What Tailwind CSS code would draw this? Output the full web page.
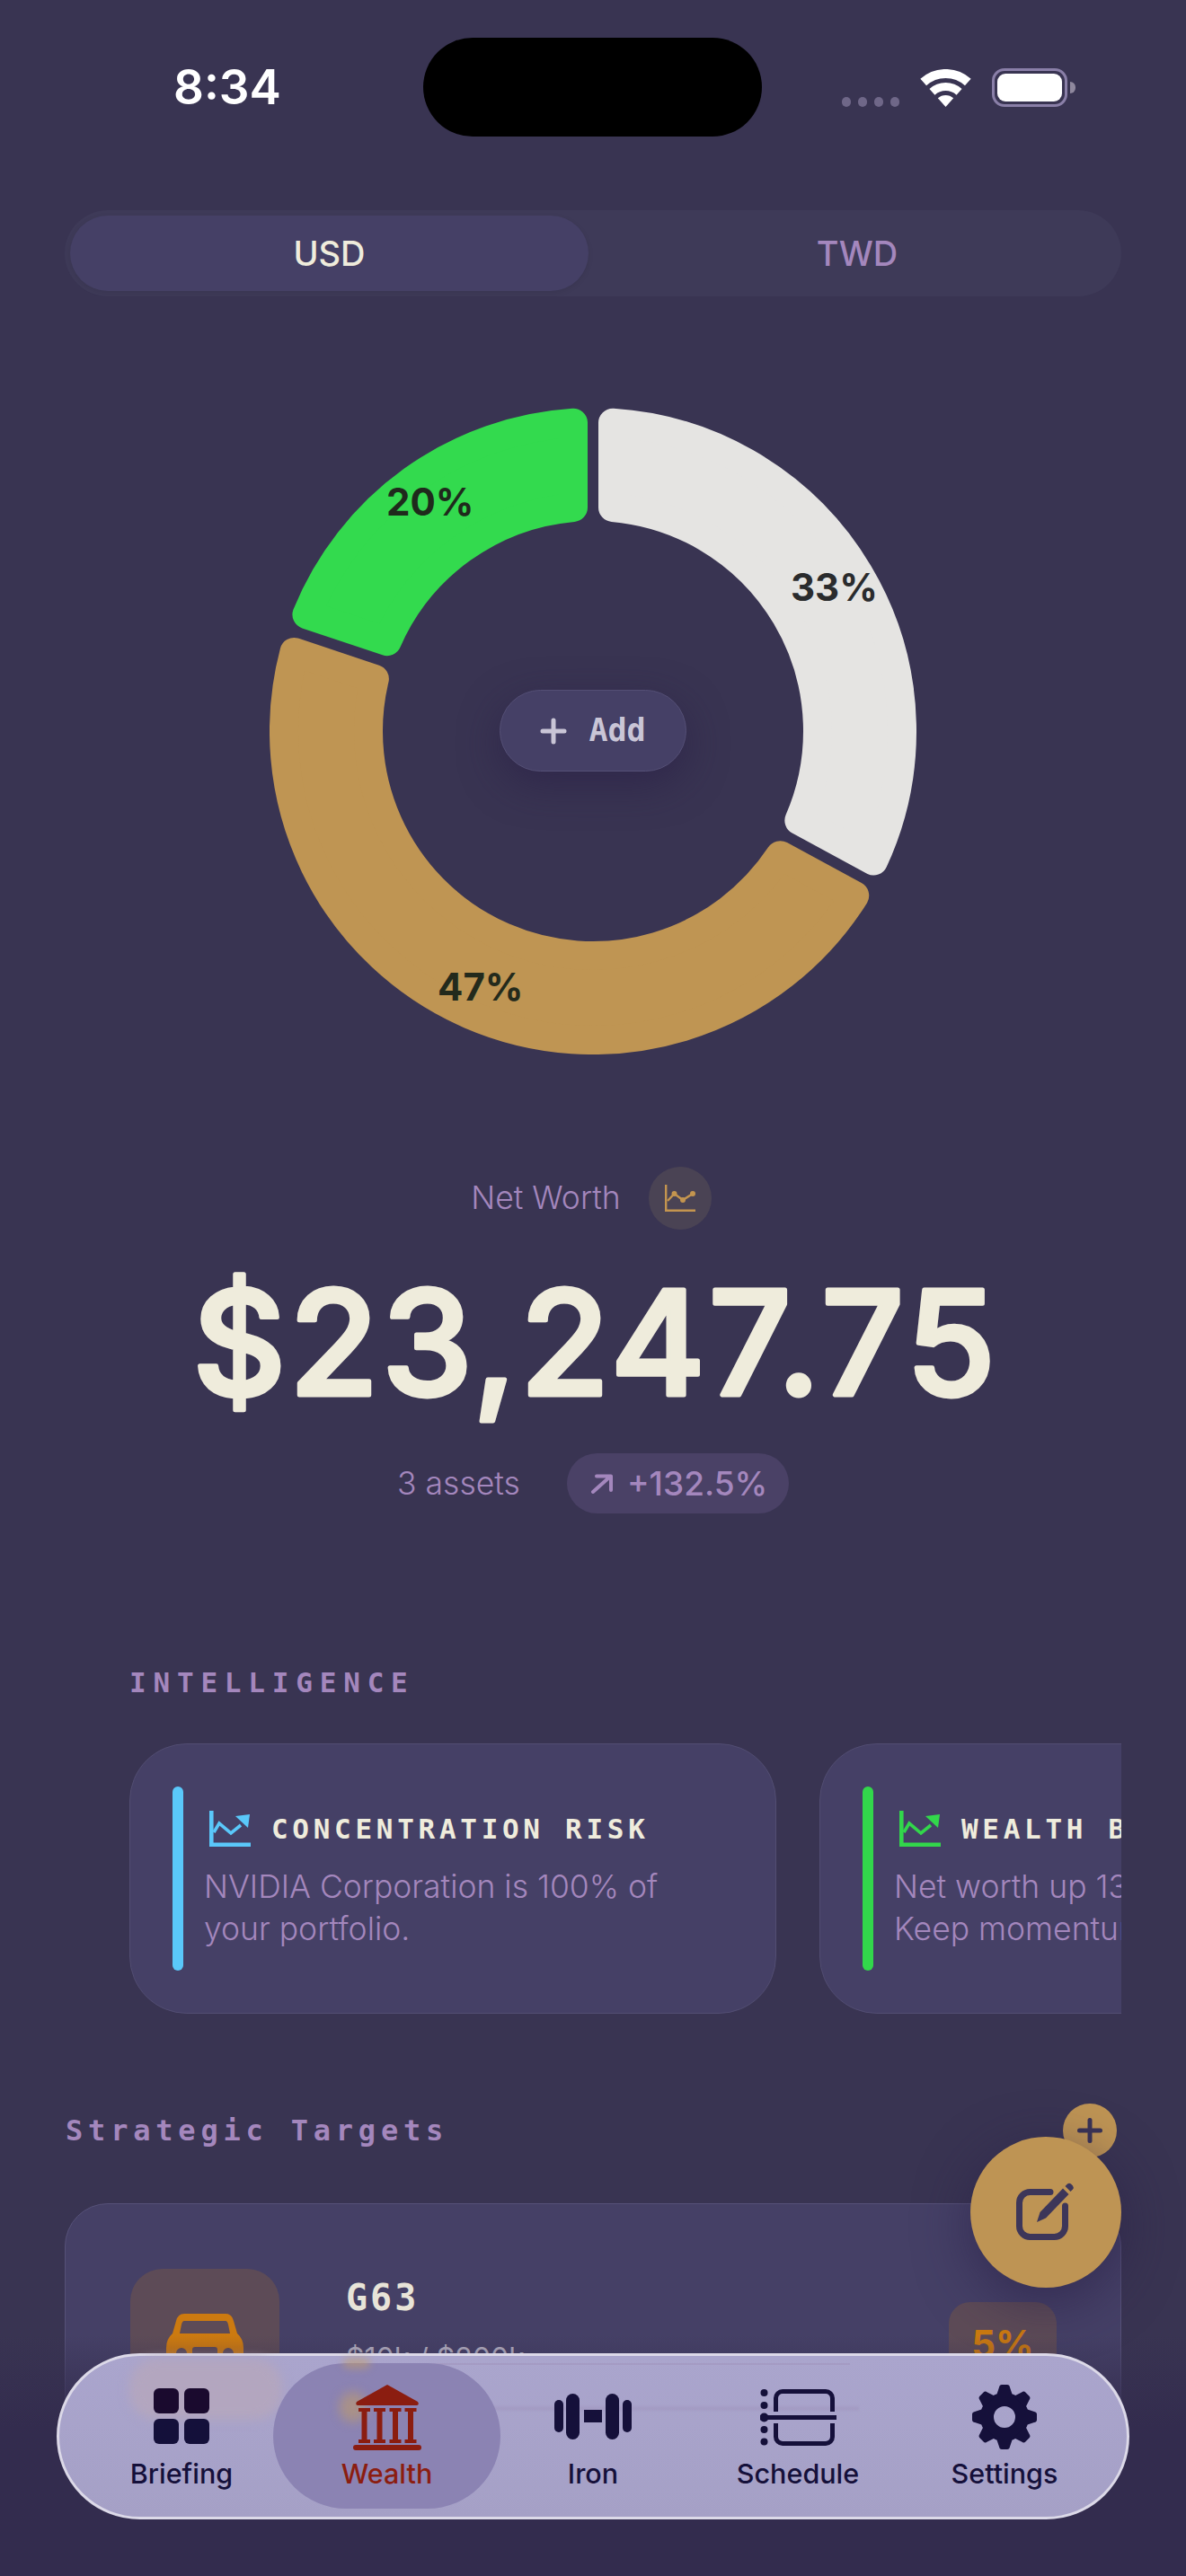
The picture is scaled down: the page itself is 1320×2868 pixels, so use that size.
<!DOCTYPE html>
<html lang="en">
<head>
    <meta charset="UTF-8">
    <title>Wealth</title>
    <script src="https://cdn.jsdelivr.net/npm/@tailwindcss/browser@4"></script>
</head>
<body>
    <div class="relative w-[1320px] h-[2868px] overflow-hidden bg-[#393452] font-['Inter',sans-serif] text-[#a487bd]">

        <!-- Status bar -->
        <div class="flex items-center h-[110px] mt-[42px]">
            <div class="w-[471px] pl-[193px] text-[53px] leading-none font-semibold text-white">8:34</div>
            <div class="w-[377px] h-[110px] rounded-full bg-black"></div>
            <div class="flex-1 flex items-end h-[43px] pl-[89px]">
                <div class="flex gap-[8px] mr-[23px]">
                    <span class="w-[10px] h-[11px] rounded-full bg-[#6f6788]"></span>
                    <span class="w-[10px] h-[11px] rounded-full bg-[#6f6788]"></span>
                    <span class="w-[10px] h-[11px] rounded-full bg-[#6f6788]"></span>
                    <span class="w-[10px] h-[11px] rounded-full bg-[#6f6788]"></span>
                </div>
                <svg class="w-[57px] h-[42px] mr-[23px]" viewBox="0 0 57 42" fill="none" stroke="#fff">
                    <path d="M3.7 14.5A37 37 0 0 1 53.3 14.5" stroke-width="10"/>
                    <path d="M13.45 25.3A22.5 22.5 0 0 1 43.55 25.3" stroke-width="9"/>
                    <path d="M19.8 32.3A13 13 0 0 1 37.2 32.3L28.5 42Z" fill="#fff" stroke="none"/>
                </svg>
                <div class="flex items-center">
                    <div class="w-[84px] h-[43px] rounded-[14px] border-[3px] border-[#8a7fa8] p-[3px]">
                        <div class="w-full h-full rounded-[9px] bg-white"></div>
                    </div>
                    <div class="w-[6px] h-[13px] ml-[3px] rounded-r-full bg-[#8f889e]"></div>
                </div>
            </div>
        </div>

        <!-- Currency switch -->
        <div class="flex mx-[72px] mt-[82px] h-[96px] p-[6px] rounded-[48px] bg-[#3e3a58]">
            <div class="w-[577px] h-[84px] rounded-[42px] bg-[#454066] flex items-center justify-center text-[38px] font-medium text-[#efecdc] shadow-[0_2px_6px_rgba(0,0,0,0.08)]">USD</div>
            <div class="flex-1 flex items-center justify-center pl-[11px] text-[38px] font-medium text-[#a487bd]">TWD</div>
        </div>

        <!-- Donut -->
        <div class="relative w-[720px] h-[720px] mt-[124px] mx-auto">
            <svg class="block w-[720px] h-[720px]" viewBox="-360 -360 720 720">
                <path class="donut fill-[#e5e4e2] stroke-[#e5e4e2]" data-from="0" data-to="118.5" stroke-width="32" stroke-linejoin="round"/>
                <path class="donut fill-[#bf9553] stroke-[#bf9553]" data-from="118.5" data-to="288.5" stroke-width="32" stroke-linejoin="round"/>
                <path class="donut fill-[#33da4e] stroke-[#33da4e]" data-from="288.5" data-to="360" stroke-width="32" stroke-linejoin="round"/>
            </svg>
            <span class="absolute left-[130px] top-[81px] text-[42px] leading-[48px] font-bold text-[#1f2a1c]">20%</span>
            <span class="absolute left-[580px] top-[176px] text-[42px] leading-[48px] font-bold text-[#2a2b2d]">33%</span>
            <span class="absolute left-[187px] top-[621px] text-[42px] leading-[48px] font-bold text-[#232a1c]">47%</span>
            <div class="absolute left-[256px] top-[314px] w-[208px] h-[91px] rounded-full bg-[#454066] border border-[#544f75] flex items-center justify-center gap-[24px] shadow-[0_14px_44px_rgba(40,30,70,0.55)]">
                <svg class="w-[30px] h-[30px]" viewBox="0 0 30 30" stroke="#c9c5d6" stroke-width="5" stroke-linecap="round">
                    <path d="M15 3V27M3 15H27"/>
                </svg>
                <span class="text-[35px] leading-none font-semibold text-[#c9c5d6] font-['DejaVu_Sans_Mono',monospace]">Add</span>
            </div>
        </div>

        <!-- Net worth -->
        <div class="flex items-center justify-center gap-[31px] mt-[125px] pr-[4px]">
            <span class="text-[35.500px] font-light leading-none">Net Worth</span>
            <div class="w-[70px] h-[70px] rounded-full bg-[#4a4354] flex items-center justify-center">
                <svg class="w-[34px] h-[30px]" viewBox="0 0 34 30" fill="none" stroke="#c4954f" stroke-width="2.4">
                    <path d="M1.2 0V28.8H34"/>
                    <path d="M3 18L10.5 10L20 17L31 10"/>
                    <circle cx="10.5" cy="10" r="1.8" fill="#c4954f"/>
                    <circle cx="20" cy="17" r="1.8" fill="#c4954f"/>
                    <circle cx="31" cy="10" r="1.8" fill="#c4954f"/>
                </svg>
            </div>
        </div>
        <svg class="block w-[1320px] h-[200px] mt-[24px]" viewBox="0 0 1320 200">
            <text x="663" y="160" text-anchor="middle" font-size="161" font-weight="500" letter-spacing="3.800" stroke-width="5" stroke-linejoin="round" class="fill-[#efecdc] stroke-[#efecdc]">$23,247.75</text>
        </svg>
        <div class="flex items-center justify-center gap-[52px] mt-[25px]">
            <span class="text-[35.500px] font-light leading-none">3 assets</span>
            <div class="flex items-center gap-[15px] w-[247px] h-[67px] pl-[26px] rounded-full bg-[#4a4166]">
                <svg class="w-[26px] h-[22px]" viewBox="0 0 26 22" fill="none" stroke="#a487bd" stroke-width="4" stroke-linecap="round" stroke-linejoin="round">
                    <path d="M3 20L22 3M7 2.5H23V18"/>
                </svg>
                <span class="text-[37px] font-medium leading-none">+132.5%</span>
            </div>
        </div>

        <!-- Intelligence -->
        <div class="ml-[144px] mt-[172px] text-[31px] leading-[32px] font-bold font-['DejaVu_Sans_Mono',monospace] tracking-[7.8px]">INTELLIGENCE</div>
        <div class="flex gap-[48px] mx-[72px] pl-[72px] mt-[52px] overflow-hidden">
            <div class="flex shrink-0 w-[720px] h-[301px] rounded-[64px] bg-[#454066] border border-[#524d72] pl-[47px] pt-[47px]">
                <div class="w-[12px] h-[205px] rounded-full bg-[#5ac8fa]"></div>
                <div class="ml-[25px] w-[520px]">
                    <div class="flex items-center h-[48px] mt-[23px]">
                        <svg class="ml-[4px] w-[46px] h-[40px]" viewBox="0 0 46 40" fill="none" stroke="#5ac8fa">
                            <path d="M2.3 0V37.7H46" stroke-width="4.6"/>
                            <path d="M5 24L11 14L24 25L35 16" stroke-width="3.6"/>
                            <path d="M29 6L45 4L43 19Z" fill="#5ac8fa" stroke="none"/>
                        </svg>
                        <span class="ml-[23px] whitespace-nowrap text-[31px] font-bold leading-none text-[#efecdc] font-['DejaVu_Sans_Mono',monospace] tracking-[4.7px]">CONCENTRATION RISK</span>
                    </div>
                    <p class="mt-[17px] -ml-[2px] text-[35.500px] leading-[47px] font-light">NVIDIA Corporation is 100% of your portfolio.</p>
                </div>
            </div>
            <div class="flex shrink-0 w-[720px] h-[301px] rounded-[64px] bg-[#454066] border border-[#524d72] pl-[47px] pt-[47px]">
                <div class="w-[12px] h-[205px] rounded-full bg-[#32d74b]"></div>
                <div class="ml-[25px] w-[520px]">
                    <div class="flex items-center h-[48px] mt-[23px]">
                        <svg class="ml-[4px] w-[46px] h-[40px]" viewBox="0 0 46 40" fill="none" stroke="#32d74b">
                            <path d="M2.3 0V37.7H46" stroke-width="4.6"/>
                            <path d="M5 24L11 14L24 25L35 16" stroke-width="3.6"/>
                            <path d="M29 6L45 4L43 19Z" fill="#32d74b" stroke="none"/>
                        </svg>
                        <span class="ml-[23px] whitespace-nowrap text-[31px] font-bold leading-none text-[#efecdc] font-['DejaVu_Sans_Mono',monospace] tracking-[4.7px]">WEALTH BUILDING</span>
                    </div>
                    <p class="mt-[17px] -ml-[2px] text-[35.500px] leading-[47px] font-light">Net worth up 132.5%.<br>Keep momentum going.</p>
                </div>
            </div>
        </div>

        <!-- Strategic targets -->
        <div class="ml-[73px] mt-[110px] text-[32px] leading-[40px] font-bold font-['DejaVu_Sans_Mono',monospace] tracking-[5.8px]">Strategic Targets</div>
        <div class="flex items-center mx-[72px] mt-[61px] h-[312px] pl-[72px] pr-[71px] rounded-[48px] bg-[#454066] border border-[#565178]">
            <div class="flex items-center justify-center shrink-0 w-[166px] h-[166px] rounded-[36px] bg-[#5d4b57]">
                <svg class="w-[86px] h-[66px]" viewBox="0 0 86 66">
                    <path fill="#cc7a10" fill-rule="evenodd" d="M20 0H66Q73 0 75 8L79 22Q86 28 86 38V66H0V38Q0 28 7 22L11 8Q13 0 20 0ZM20 8Q18 8 17 12L15 22H71L69 12Q68 8 66 8ZM17 38A6 6 0 0 0 17 50A6 6 0 0 0 17 38ZM69 38A6 6 0 0 0 69 50A6 6 0 0 0 69 38ZM32 37Q29 37 29 40V50H57V40Q57 37 54 37Z"/>
                </svg>
            </div>
            <div class="ml-[74px] flex-1 mb-[38px]">
                <div class="text-[40px] leading-[48px] font-bold text-[#e8e4d8] font-['DejaVu_Sans_Mono',monospace] tracking-[3px]">G63</div>
                <div class="mt-[24px] text-[32px] leading-[40px] text-[#b4afc0]">$10k / $200k</div>
            </div>
            <div class="flex items-center justify-center w-[120px] h-[92px] rounded-[24px] bg-[#5d4b57] text-[42px] font-bold text-[#cc7a10]">5%</div>
        </div>

        <!-- fade under the nav -->
        <div class="absolute left-0 top-[2600px] w-full h-[268px] bg-linear-to-b from-[#332c4e]/0 to-[#332c4e] to-38%"></div>

        <!-- FAB -->
        <div class="absolute left-[1183px] top-[2342px] w-[60px] h-[60px] rounded-full bg-[#be9454] flex items-center justify-center">
            <svg class="w-[28px] h-[28px]" viewBox="0 0 28 28" stroke="#3a3355" stroke-width="5" stroke-linecap="round"><path d="M14 2.5V25.5M2.5 14H25.5"/></svg>
        </div>
        <div class="absolute left-[1080px] top-[2379px] w-[168px] h-[168px] rounded-full bg-[#be9454] flex items-center justify-center shadow-[0_16px_60px_rgba(40,30,70,0.6)]">
            <svg class="w-[66px] h-[66px]" viewBox="0 0 66 66" fill="none">
                <path d="M38 10.5H15.5A12 12 0 0 0 3.5 22.5V48.5A12 12 0 0 0 15.5 60.5H42.5A12 12 0 0 0 54.5 48.5V26" stroke="#3d3659" stroke-width="7" stroke-linecap="round"/>
                <path d="M23 44L26.5 33L52 6.5L58.5 13L33 39.5Z" fill="#3d3659" stroke="#be9454" stroke-width="3" paint-order="stroke"/>
                <path d="M54.5 4L57 1.5Q59 0 61 1.5L63 3.5Q64.5 5.5 63 7.5L60.5 10Z" fill="#3d3659"/>
            </svg>
        </div>

        <!-- Tab bar -->
        <nav class="absolute left-[63px] top-[2620px] w-[1194px] h-[185px] rounded-full border-[3px] border-[#dcd9e8] bg-linear-to-b from-[#aaa5cd] to-[#a5a0c6] text-[#15103a]">
            <div class="absolute left-[78px] top-[3px] w-[170px] h-[68px] rounded-[30px] bg-[#b3a6bf] blur-[6px]"></div>
            <div class="absolute left-[340px] top-[8px] w-[540px] h-[2px] bg-[#9d92b9]/50"></div>
            <div class="absolute left-[340px] top-[56px] w-[550px] h-[5px] bg-[#9d92b9]/40 blur-[1px]"></div>

            <div class="relative flex items-stretch h-full">
                <div class="w-[238px] pl-[34px] flex flex-col items-center pt-[36px]">
                    <div class="grid grid-cols-2 gap-[6px] w-[62px]">
                        <span class="h-[28px] rounded-[6px] bg-[#1a0a2e]"></span>
                        <span class="h-[28px] rounded-[6px] bg-[#1a0a2e]"></span>
                        <span class="h-[28px] rounded-[6px] bg-[#14103a]"></span>
                        <span class="h-[28px] rounded-[6px] bg-[#14103a]"></span>
                    </div>
                    <span class="mt-[15px] text-[30.500px] leading-[36px] font-medium">Briefing</span>
                </div>
                <div class="relative w-[253px] h-[162px] mt-[8px] rounded-[81px] bg-[#8b83b3] flex flex-col items-center pt-[23px] text-[#8b1d10]">
                    <div class="absolute left-[74px] top-[32px] w-[30px] h-[34px] rounded-full bg-[#c8a060]/50 blur-[6px]"></div>
                    <div class="absolute left-[78px] -top-[6px] w-[30px] h-[12px] rounded-full bg-[#c8a060]/50 blur-[4px]"></div>
                    <svg class="relative w-[76px] h-[74px]" viewBox="0 0 76 74" fill="#8b1d10">
                        <path d="M38 1L72 20Q74 23 71 24H5Q2 23 4 20Z"/>
                        <path d="M6 27H19V31H15.5V62H19V66H6V62H9.5V31H6ZM23 27H36V31H32.5V62H36V66H23V62H26.5V31H23ZM40.500 27H53.500V31H50V62H53.500V66H40.500V62H44V31H40.500ZM57.500 27H70.500V31H67V62H70.500V66H57.500V62H61V31H57.500Z"/>
                        <rect x="0" y="68" width="76" height="6" rx="3"/>
                    </svg>
                    <span class="mt-[8px] text-[30.500px] leading-[36px] font-medium">Wealth</span>
                </div>
                <div class="w-[206px] flex flex-col items-center pt-[42px]">
                    <svg class="w-[86px] h-[51px]" viewBox="0 0 86 51" fill="#15103a">
                        <rect x="0" y="7" width="10" height="36" rx="5"/>
                        <rect x="13" y="0" width="15" height="51" rx="7.500"/>
                        <rect x="33" y="18" width="20" height="14"/>
                        <rect x="57" y="0" width="15" height="51" rx="7.500"/>
                        <rect x="76" y="7" width="10" height="36" rx="5"/>
                    </svg>
                    <span class="mt-[20px] text-[30.500px] leading-[36px] font-medium">Iron</span>
                </div>
                <div class="w-[250px] flex flex-col items-center pt-[37px]">
                    <svg class="w-[85px] h-[63px]" viewBox="0 0 85 63" fill="none" stroke="#15103a">
                        <path d="M17.500 25V10A7.500 7.500 0 0 1 25 2.500H73A7.500 7.500 0 0 1 80.500 10V25M17.500 38V53A7.500 7.500 0 0 0 25 60.500H73A7.500 7.500 0 0 0 80.500 53V38" stroke-width="5"/>
                        <path d="M5 31.500H85" stroke-width="5" stroke-linecap="round"/>
                        <g fill="#15103a" stroke="none">
                            <circle cx="4.500" cy="4" r="4"/>
                            <circle cx="4.500" cy="18" r="4"/>
                            <circle cx="4.500" cy="31.500" r="5"/>
                            <circle cx="4.500" cy="45" r="4"/>
                            <circle cx="4.500" cy="58.500" r="4"/>
                        </g>
                    </svg>
                    <span class="mt-[13px] text-[30.500px] leading-[36px] font-medium">Schedule</span>
                </div>
                <div class="w-[210px] flex flex-col items-center pt-[32px]">
                    <svg class="w-[72px] h-[72px]" viewBox="-36 -36 72 72" fill="#15103a">
                        <circle r="19.500" fill="none" stroke="#15103a" stroke-width="15"/>
                        <path id="tooth" d="M-9 -24L-6 -33Q-5.500 -36 -3 -36H3Q5.500 -36 6 -33L9 -24Z"/>
                        <use href="#tooth" transform="rotate(45)"/>
                        <use href="#tooth" transform="rotate(90)"/>
                        <use href="#tooth" transform="rotate(135)"/>
                        <use href="#tooth" transform="rotate(180)"/>
                        <use href="#tooth" transform="rotate(225)"/>
                        <use href="#tooth" transform="rotate(270)"/>
                        <use href="#tooth" transform="rotate(315)"/>
                    </svg>
                    <span class="mt-[9px] text-[30.500px] leading-[36px] font-medium">Settings</span>
                </div>
            </div>
        </nav>
    </div>

    <script>
        // ring segments: inset the sector, the round stroke gives the corners
        const OUTER = 344, INNER = 250, EDGE = 22;
        const pt = (r, deg) => {
            const a = deg * Math.PI / 180;
            return `${(r * Math.sin(a)).toFixed(2)} ${(-r * Math.cos(a)).toFixed(2)}`;
        };
        document.querySelectorAll('.donut').forEach(el => {
            const from = +el.dataset.from, to = +el.dataset.to;
            const oPad = Math.asin(EDGE / OUTER) * 180 / Math.PI;
            const iPad = Math.asin(EDGE / INNER) * 180 / Math.PI;
            const large = (to - from - 2 * oPad) > 180 ? 1 : 0;
            const largeIn = (to - from - 2 * iPad) > 180 ? 1 : 0;
            el.setAttribute('d',
                `M${pt(OUTER, from + oPad)} A${OUTER} ${OUTER} 0 ${large} 1 ${pt(OUTER, to - oPad)} ` +
                `L${pt(INNER, to - iPad)} A${INNER} ${INNER} 0 ${largeIn} 0 ${pt(INNER, from + iPad)} Z`);
        });
    </script>
</body>
</html>
